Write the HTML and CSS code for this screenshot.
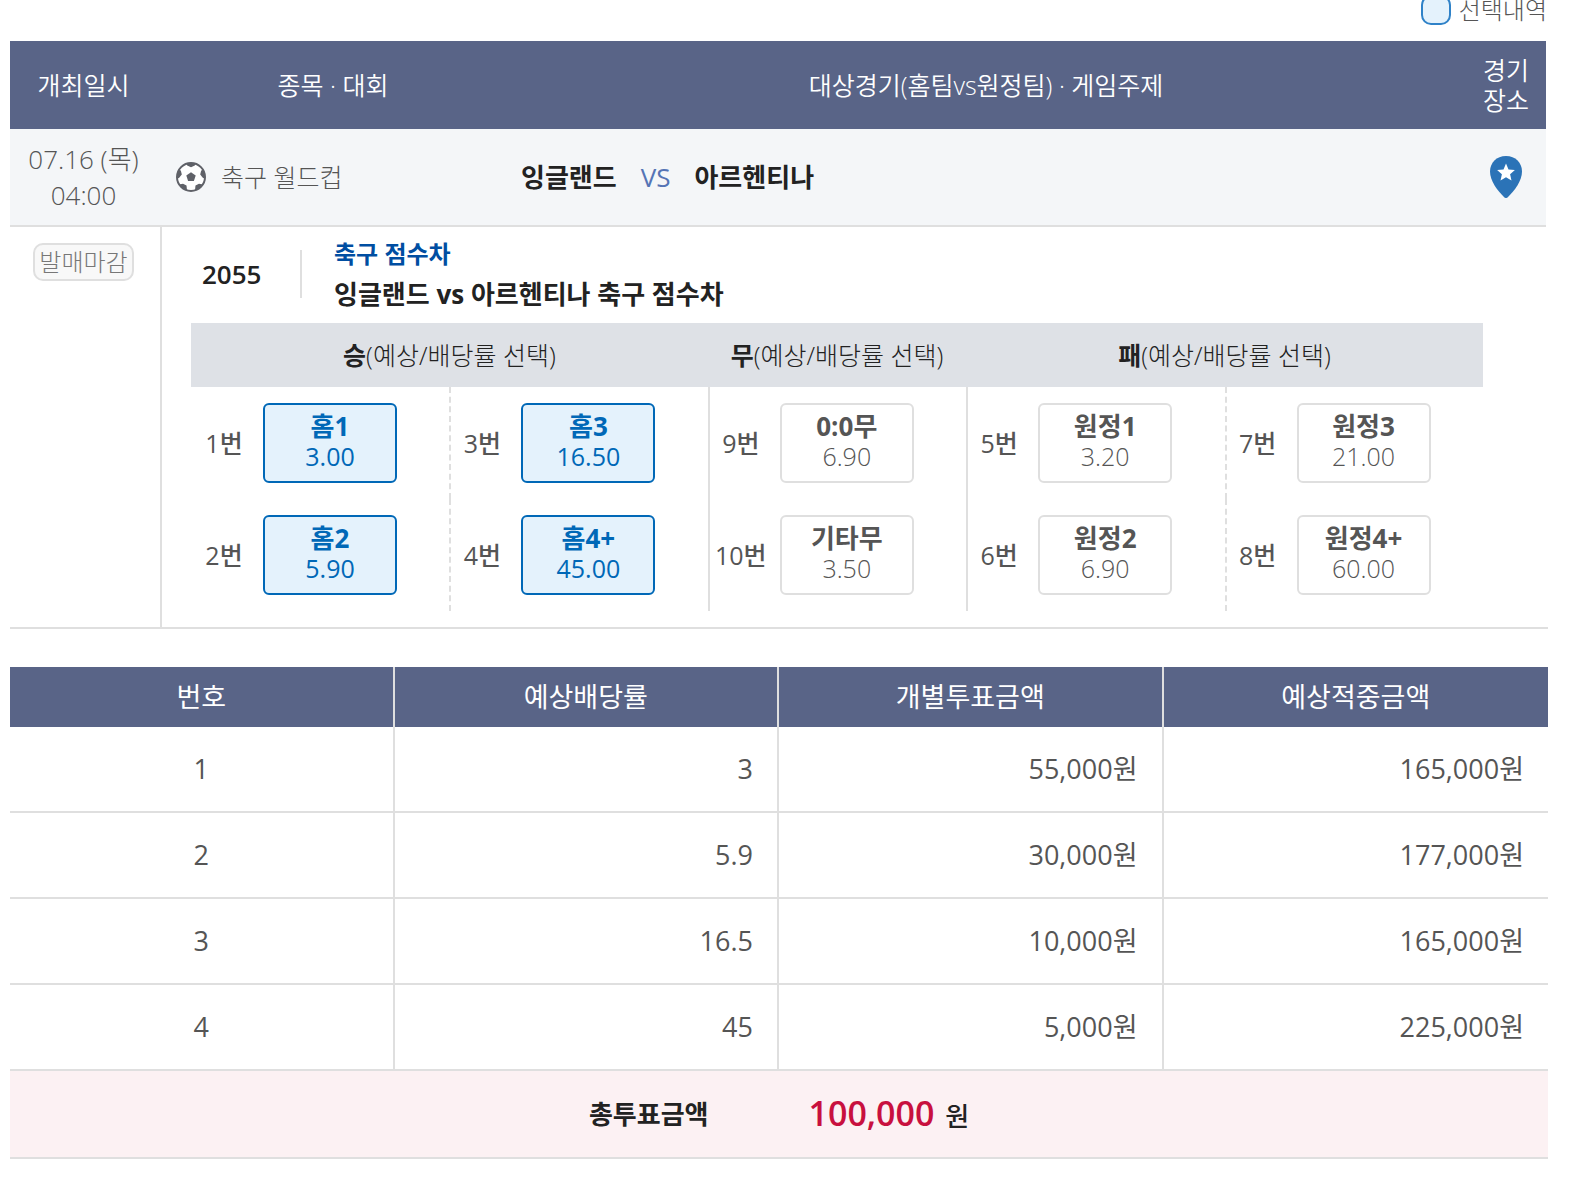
FILE: index.html
```html
<!DOCTYPE html>
<html lang="ko">
<head>
    <meta charset="UTF-8">
    <meta name="viewport" content="width=device-width, initial-scale=1.0">
    <title>축구 점수차</title>
    <link rel="stylesheet" href="styles.css">
</head>
<body>
    <div class="container">
        <div class="legend">
            <span class="swatch"></span>
            <span>선택내역</span>
        </div>

        <div class="match-wrap">
            <table class="match">
                <colgroup>
                    <col class="col-date">
                    <col class="col-league">
                    <col>
                    <col class="col-place">
                </colgroup>
                <thead>
                    <tr>
                        <th class="date">개최일시</th>
                        <th>종목 · 대회</th>
                        <th>대상경기(홈팀vs원정팀) · 게임주제</th>
                        <th>경기<br>장소</th>
                    </tr>
                </thead>
                <tbody>
                    <tr class="match-info">
                        <td class="date">07.16 (목)<br>04:00</td>
                        <td>
                            <div class="league">
                                <svg class="ball" viewBox="0 0 30 30" aria-hidden="true">
                                    <defs><clipPath id="ball"><circle cx="15" cy="15" r="14"/></clipPath></defs>
                                    <circle cx="15" cy="15" r="14" fill="#fff"/>
                                    <g clip-path="url(#ball)" fill="#5f6168">
                                        <path d="M15 10.2l4.7 3.4-1.8 5.5h-5.8l-1.8-5.5z"/>
                                        <path d="M9.5 0h11l-1.700 3.600L15 5.200l-3.800-1.600z"/>
                                        <path d="M30 7v10l-3.200-1.200-2.600-3.200 1-4.200z"/>
                                        <path d="M0 7v10l3.200-1.200 2.600-3.200-1-4.200z"/>
                                        <path d="M19 28l.500-4.600 3.500-1.600 4 .6L23 29z"/>
                                        <path d="M11 28l-.500-4.600-3.500-1.600-4 .6L7 29z"/>
                                    </g>
                                    <circle cx="15" cy="15" r="14" fill="none" stroke="#5f6168" stroke-width="2"/>
                                </svg>
                                <span>축구 월드컵</span>
                            </div>
                        </td>
                        <td>
                            <div class="teams">
                                <strong>잉글랜드</strong>
                                <span class="vs">VS</span>
                                <strong>아르헨티나</strong>
                            </div>
                        </td>
                        <td>
                            <button type="button" class="place" aria-label="경기 장소">
                                <svg viewBox="0 0 32 42" aria-hidden="true">
                                    <path fill="#2b73b7" d="M16 0C6.500 0 0 6.800 0 15.500 0 25 7.500 34.500 14.200 41.200c1.100 1.100 2.500 1.100 3.600 0C24.500 34.500 32 25 32 15.500 32 6.800 25.500 0 16 0z"/>
                                    <path fill="#fff" d="M16 7.500l2.500 5.900 6.400.6-4.800 4.200 1.400 6.300-5.500-3.300-5.500 3.300 1.400-6.300L7.100 14l6.400-.6z"/>
                                </svg>
                            </button>
                        </td>
                    </tr>
                    <tr class="match-game">
                        <td class="date"><span class="badge">발매마감</span></td>
                        <td colspan="3" class="game">
                            <div class="game-head">
                                <div class="game-no">2055</div>
                                <div class="game-title">
                                    <p class="type">축구 점수차</p>
                                    <p>잉글랜드 vs 아르헨티나 축구 점수차</p>
                                </div>
                            </div>
                            <table class="odds">
                                <thead>
                                    <tr>
                                        <th colspan="2"><b>승</b>(예상/배당률 선택)</th>
                                        <th><b>무</b>(예상/배당률 선택)</th>
                                        <th colspan="2"><b>패</b>(예상/배당률 선택)</th>
                                    </tr>
                                </thead>
                                <tbody>
                                    <tr>
                                        <td><div class="pick"><span>1번</span><button type="button" class="on"><b>홈1</b>3.00</button></div></td>
                                        <td class="dashed"><div class="pick"><span>3번</span><button type="button" class="on"><b>홈3</b>16.50</button></div></td>
                                        <td class="solid"><div class="pick"><span>9번</span><button type="button"><b>0:0무</b>6.90</button></div></td>
                                        <td class="solid"><div class="pick"><span>5번</span><button type="button"><b>원정1</b>3.20</button></div></td>
                                        <td class="dashed"><div class="pick"><span>7번</span><button type="button"><b>원정3</b>21.00</button></div></td>
                                    </tr>
                                    <tr>
                                        <td><div class="pick"><span>2번</span><button type="button" class="on"><b>홈2</b>5.90</button></div></td>
                                        <td class="dashed"><div class="pick"><span>4번</span><button type="button" class="on"><b>홈4+</b>45.00</button></div></td>
                                        <td class="solid"><div class="pick"><span>10번</span><button type="button"><b>기타무</b>3.50</button></div></td>
                                        <td class="solid"><div class="pick"><span>6번</span><button type="button"><b>원정2</b>6.90</button></div></td>
                                        <td class="dashed"><div class="pick"><span>8번</span><button type="button"><b>원정4+</b>60.00</button></div></td>
                                    </tr>
                                </tbody>
                            </table>
                        </td>
                    </tr>
                </tbody>
            </table>
        </div>

        <table class="bets">
            <thead>
                <tr>
                    <th>번호</th>
                    <th>예상배당률</th>
                    <th>개별투표금액</th>
                    <th>예상적중금액</th>
                </tr>
            </thead>
            <tbody>
                <tr><td>1</td><td>3</td><td>55,000원</td><td>165,000원</td></tr>
                <tr><td>2</td><td>5.9</td><td>30,000원</td><td>177,000원</td></tr>
                <tr><td>3</td><td>16.5</td><td>10,000원</td><td>165,000원</td></tr>
                <tr><td>4</td><td>45</td><td>5,000원</td><td>225,000원</td></tr>
            </tbody>
        </table>
        <div class="total">
            <strong>총투표금액</strong>
            <span class="sum"><em>100,000</em> 원</span>
        </div>
    </div>
</body>
</html>
```
FILE: styles.css
```css
* {
    box-sizing: border-box;
}
body {
    margin: 0;
    background: #fff;
    color: #555;
    font-family: "Open Sans", "Noto Sans", "Noto Sans CJK KR", sans-serif;
    font-size: 24px;
    font-weight: 300;
    line-height: 30px;
    overflow-x: hidden;
}
.container {
    margin: 0 31px 0 10px;
}
table {
    width: 100%;
    border-collapse: separate;
    border-spacing: 0;
    table-layout: fixed;
}
th, td {
    padding: 0;
}
button {
    font: inherit;
    color: inherit;
    cursor: pointer;
}
strong, b {
    font-weight: 700;
}

/* legend */
.legend {
    display: flex;
    justify-content: flex-end;
    gap: 8px;
    margin: -5px 1px 16px 0;
}
.swatch {
    width: 30px;
    height: 30px;
    border: 2px solid #2f82c8;
    border-radius: 10px;
    background: #e4f2fc;
}

/* match table */
.match-wrap {
    padding-right: 2px;
    margin-bottom: 38px;
    border-bottom: 2px solid #dfdfdf;
}
.col-date {
    width: 150px;
}
.col-league {
    width: 346px;
}
.col-place {
    width: 80px;
}
.match > thead th {
    height: 88px;
    background: #596487;
    color: #fff;
    font-size: 25px;
    font-weight: 350;
}
.match .date {
    padding-right: 3px;
    text-align: center;
}
.match-info td {
    height: 98px;
    background: #f4f6f8;
    border-bottom: 2px solid #dfdfdf;
}
.match-info .date {
    font-size: 26px;
    line-height: 36px;
}
.league {
    display: flex;
    align-items: center;
    gap: 15px;
    padding-left: 16px;
    font-size: 25px;
}
.ball {
    width: 30px;
    height: 30px;
}
.teams {
    display: flex;
    align-items: center;
    gap: 24px;
    padding-left: 15px;
    color: #222;
    font-size: 26px;
}
.teams .vs {
    color: #5574b5;
    font-weight: 400;
}
.place {
    display: block;
    margin: auto;
    padding: 0;
    border: 0;
    background: none;
}
.place svg {
    display: block;
    width: 32px;
    height: 42px;
}
.match-game > td {
    vertical-align: top;
}
.match-game > .date {
    padding-top: 16px;
}
.badge {
    display: inline-block;
    padding: 2px 4px;
    border: 2px solid #dfdfdf;
    border-radius: 10px;
    background: #f8f8f8;
    color: #777;
}
.game {
    padding: 8px 63px 16px 29px;
    border-left: 2px solid #dfdfdf;
}
.game-head {
    display: flex;
    align-items: center;
    height: 88px;
    padding-bottom: 10px;
    color: #222;
    font-size: 26px;
    line-height: 40px;
}
.game-no {
    width: 111px;
    padding-left: 11px;
    border-right: 2px solid #dfdfdf;
    font-weight: 600;
    line-height: 48px;
}
.game-title {
    padding-left: 32px;
}
.game-title p {
    margin: 0;
    font-weight: 700;
}
.game-title .type {
    color: #004ea2;
    font-size: 24px;
}

/* odds */
.odds th {
    height: 64px;
    background: #dee1e6;
    color: #222;
    font-size: 25px;
    font-weight: 300;
}
.odds td {
    height: 112px;
}
.odds .solid {
    border-left: 2px solid #dfdfdf;
}
.odds .dashed {
    border-left: 2px dashed #dfdfdf;
}
.odds td:first-child {
    border-left: 2px solid transparent;
}
.pick {
    display: flex;
    align-items: center;
    font-size: 25px;
    font-weight: 500;
}
.pick span {
    width: 62px;
    margin-right: 8px;
    text-align: center;
}
.pick button {
    width: 134px;
    height: 80px;
    padding: 0 0 4px;
    border: 2px solid #dfdfdf;
    border-radius: 6px;
    background: #fff;
    font-weight: 300;
}
.pick button b {
    display: block;
    font-size: 26px;
}
.pick button.on {
    border-color: #0068b7;
    background: #e4f2fc;
    color: #0068b7;
    font-weight: 500;
}

/* bets */
.bets {
    font-size: 27px;
    font-weight: 400;
}
.bets th {
    height: 60px;
    background: #596487;
    color: #fff;
    font-weight: 400;
}
.bets td {
    height: 86px;
    padding-right: 24px;
    border-bottom: 2px solid #dfdfdf;
    text-align: right;
}
.bets td:first-child {
    padding: 0;
    text-align: center;
}
.bets th:not(:last-child), .bets td:not(:last-child) {
    border-right: 2px solid #dfdfdf;
}
.total {
    display: flex;
    align-items: center;
    justify-content: center;
    gap: 100px;
    height: 88px;
    border-bottom: 2px solid #dfdfdf;
    background: #fcf1f3;
    color: #222;
    font-size: 26px;
}
.total .sum {
    font-weight: 500;
}
.total em {
    margin-right: 4px;
    color: #c8103e;
    font-size: 34px;
    font-style: normal;
    font-weight: 600;
}
```
